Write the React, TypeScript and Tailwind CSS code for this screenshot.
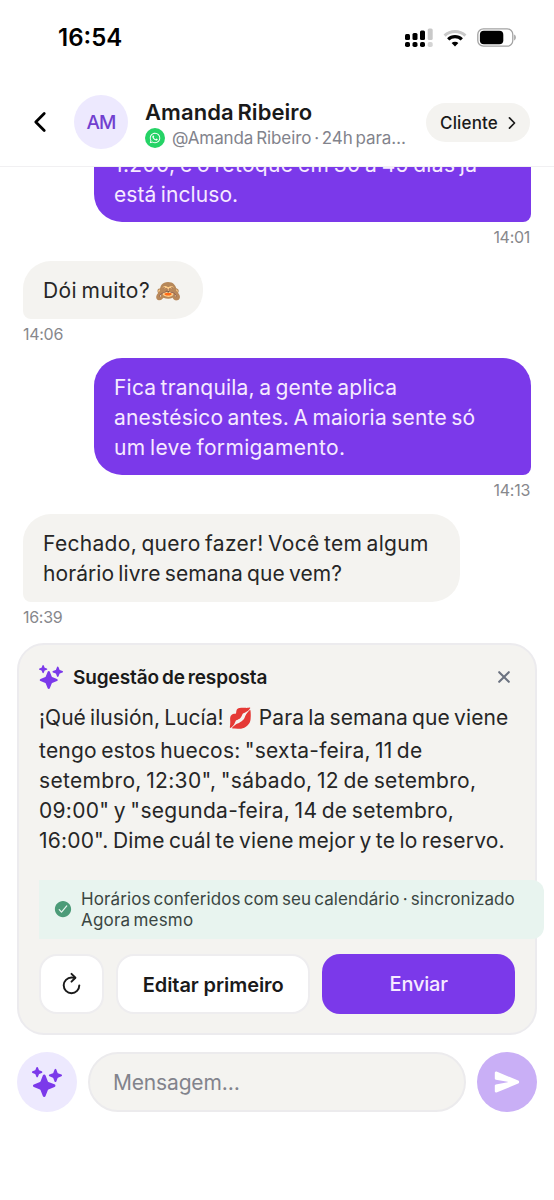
import { ReactNode } from 'react'
import {
  IoCheckmarkCircle,
  IoChevronBack,
  IoChevronForward,
  IoClose,
  IoLogoWhatsapp,
  IoRefreshOutline,
  IoSend,
  IoSparkles,
} from 'react-icons/io5'

type Line = { text: ReactNode; className?: string }

type Message = {
  id: string
  mine: boolean
  time: string
  lines: Line[]
}

const messages: Message[] = [
  {
    id: '1',
    mine: true,
    time: '14:01',
    lines: [
      { text: '1.200, e o retoque em 30 a 45 dias já', className: 'tracking-[0.35px]' },
      { text: 'está incluso.', className: 'tracking-[0.1px]' },
    ],
  },
  {
    id: '2',
    mine: false,
    time: '14:06',
    lines: [
      {
        text: (
          <>
            <span className="tracking-[0.42px]">Dói muito? </span>
            <span className="inline-block w-[28px] text-[21px] leading-none">🙈</span>
          </>
        ),
      },
    ],
  },
  {
    id: '3',
    mine: true,
    time: '14:13',
    lines: [
      { text: 'Fica tranquila, a gente aplica', className: 'tracking-[0.2px]' },
      { text: 'anestésico antes. A maioria sente só', className: 'tracking-[0.21px]' },
      { text: 'um leve formigamento.', className: 'tracking-[0.35px]' },
    ],
  },
  {
    id: '4',
    mine: false,
    time: '16:39',
    lines: [
      { text: 'Fechado, quero fazer! Você tem algum', className: 'tracking-[0.31px]' },
      { text: 'horário livre semana que vem?', className: 'tracking-[0.08px]' },
    ],
  },
]

function StatusBar() {
  return (
    <div className="flex h-[75px] shrink-0 items-center justify-between pl-[58px] pr-[38px]">
      <span className="text-2xl font-semibold text-black">16:54</span>
      <div className="flex items-center">
        <svg width="28" height="20" viewBox="0 0 28 20" fill="#000">
          <rect x="0" y="6" width="5" height="6" rx="1.5" />
          <rect x="7.5" y="5" width="5" height="7" rx="1.5" />
          <rect x="15" y="2.5" width="5" height="9.5" rx="1.5" />
          <rect x="22.7" y="0.5" width="5" height="11.5" rx="1.5" fill="#c9c9c9" />
          <rect x="0" y="14" width="5" height="5" rx="1.8" />
          <rect x="7.5" y="14" width="5" height="5" rx="1.8" />
          <rect x="15" y="14" width="5" height="5" rx="1.8" />
          <rect x="22.7" y="14" width="5" height="5" rx="1.8" fill="#d4d4d4" />
        </svg>
        <svg className="ml-[10px]" width="24" height="18" viewBox="0 0 24 18" fill="none">
          <path d="M1.6 6.6a15 15 0 0 1 20.8 0" stroke="#c9c9c9" strokeWidth="3" />
          <path d="M5.2 10.4a9.8 9.8 0 0 1 13.6 0" stroke="#000" strokeWidth="3.2" />
          <path d="M12 17.4l-3.4-3.4a4.9 4.9 0 0 1 6.8 0z" fill="#000" />
        </svg>
        <svg className="ml-[10px]" width="39" height="19" viewBox="0 0 39 19" fill="none">
          <rect x="0.8" y="0.8" width="35" height="17.4" rx="5.6" stroke="#a3a3a3" strokeWidth="1.3" />
          <rect x="2.9" y="2.8" width="23.4" height="13.4" rx="4" fill="#000" />
          <path d="M37.3 6.6c1.8.6 1.8 5.2 0 5.8z" fill="#8f8f8f" />
        </svg>
      </div>
    </div>
  )
}

function Header() {
  return (
    <header className="flex h-[92px] shrink-0 items-center border-b border-[#f1f0f2] pt-[3px] pl-[25px] pr-6">
      <IoChevronBack className="size-[30px] text-black" />
      <div className="ml-[19px] flex size-[54px] shrink-0 items-center justify-center rounded-full bg-[#ede9fe] pt-[2px] text-[19px] font-medium tracking-[-0.8px] text-[#7140cf]">
        AM
      </div>
      <div className="ml-[17px] mt-[3px] flex-1 whitespace-nowrap">
        <h1 className="text-[22px] leading-7 font-semibold tracking-[0.06px] text-[#1a1a1a]">Amanda Ribeiro</h1>
        <div className="flex h-6 items-center">
          <span className="flex size-5 shrink-0 items-center justify-center rounded-full bg-[#25d366]">
            <IoLogoWhatsapp className="size-3 text-white" />
          </span>
          <span className="ml-[7px] pt-px text-[17px] leading-6 tracking-[-0.1px] text-[#82838c]">
            @Amanda Ribeiro · 24h para…
          </span>
        </div>
      </div>
      <button className="mt-px flex h-[39px] w-[104px] shrink-0 items-center rounded-full bg-[#f4f3f0] pl-[14px] text-[17px] font-medium tracking-[0.16px] text-[#1a1a1a]">
        Cliente
        <IoChevronForward className="ml-[5px] size-[18px]" />
      </button>
    </header>
  )
}

function Bubble({ message }: { message: Message }) {
  const { mine, time, lines } = message
  return (
    <div className={mine ? 'flex flex-col items-end' : 'flex flex-col items-start'}>
      <div
        className={
          mine
            ? 'w-[437px] rounded-[28px] rounded-br-lg bg-[#7b39ea] px-5 pt-[15px] pb-3 text-[#f6eaff]'
            : 'max-w-[437px] rounded-[28px] rounded-bl-lg bg-[#f4f3f0] px-5 pt-[15px] pb-[13px] text-[#262626]'
        }
      >
        {lines.map((line, i) => (
          <p
            key={i}
            className={`whitespace-nowrap ${!mine && lines.length > 1 ? 'w-[397px]' : ''} ${line.className ?? ''}`}
          >
            {line.text}
          </p>
        ))}
      </div>
      <span
        className={`mt-[5px] mb-[14px] text-base leading-5 tracking-[-0.29px] text-[#87888c] ${mine ? 'mr-px' : ''}`}
      >
        {time}
      </span>
    </div>
  )
}

function Suggestion() {
  return (
    <section className="mx-[17px] mt-[2px] h-[392px] shrink-0 rounded-[27px] border-2 border-[#ecebee] bg-[#f4f3f0] px-5 pt-[18px]">
      <div className="flex h-[30px] items-center">
        <IoSparkles className="mb-[2px] size-6 text-[#7b39ea]" />
        <h2 className="ml-[10px] text-[19px] font-semibold tracking-[-0.1px] text-[#1a1a1a]">
          Sugestão de resposta
        </h2>
        <IoClose className="mb-[2px] ml-auto size-[22px] text-[#6b7280]" />
      </div>

      <div className="whitespace-nowrap text-[#262626]">
        <p className="mt-[10px] mb-[3px]">
          <span className="tracking-[0.03px]">¡Qué ilusión, Lucía! </span>
          <span className="inline-block w-[24px] align-baseline text-[20px] leading-none">💋</span>
          <span className="ml-[7px] tracking-[0.1px]">Para la semana que viene</span>
        </p>
        <p className="tracking-[0.21px]">tengo estos huecos: "sexta-feira, 11 de</p>
        <p className="tracking-[0.34px]">setembro, 12:30", "sábado, 12 de setembro,</p>
        <p className="tracking-[0.3px]">09:00" y "segunda-feira, 14 de setembro,</p>
        <p className="tracking-[0.2px]">16:00". Dime cuál te viene mejor y te lo reservo.</p>
      </div>

      <div className="mt-[24px] flex h-[59px] w-[505px] items-center rounded-r-xl bg-[#e8f4ef] pt-px pl-[14px] text-[17px] leading-[21px] tracking-[0.1px] text-[#3a4642]">
        <IoCheckmarkCircle className="mb-[2px] size-5 shrink-0 text-[#4c9b78]" />
        <p className="ml-[8px] whitespace-nowrap">
          Horários conferidos com seu calendário · sincronizado
          <br />
          <span className="tracking-[0.2px]">Agora mesmo</span>
        </p>
      </div>

      <div className="mt-[15px] flex h-[60px] gap-3">
        <button className="flex w-[65px] items-center justify-center rounded-[18px] border-2 border-[#eeedef] bg-white pb-[2px]">
          <IoRefreshOutline className="size-[25px] text-[#1a1a1a] [&_*]:[stroke-width:40px]" />
        </button>
        <button className="w-[195px] rounded-[18px] border-2 border-[#eeedef] bg-white pt-px text-xl font-semibold tracking-[-0.08px] text-[#1a1a1a]">
          Editar primeiro
        </button>
        <button className="w-[193px] rounded-[18px] bg-[#7b39ea] text-xl font-medium tracking-[-0.2px] text-[#f6eaff]">
          Enviar
        </button>
      </div>
    </section>
  )
}

function Composer() {
  return (
    <footer className="mt-[17px] flex h-[60px] shrink-0 items-center px-[17px]">
      <button className="flex size-[60px] items-center justify-center rounded-full bg-[#ede9fe]">
        <IoSparkles className="size-[30px] text-[#7b39ea]" />
      </button>
      <div className="ml-[11px] flex h-[60px] w-[378px] items-center rounded-full border-2 border-[#ecebed] bg-[#f4f3f0] pt-px pl-[23px] tracking-[-0.17px] text-[#82838c]">
        Mensagem…
      </div>
      <button className="ml-[11px] flex size-[60px] items-center justify-center rounded-full bg-[#c9aff6]">
        <IoSend className="size-[26px] text-white" />
      </button>
    </footer>
  )
}

export default function App() {
  return (
    <div className="flex h-[1200px] w-[554px] flex-col overflow-hidden bg-white font-['Inter','Liberation_Sans',sans-serif] text-[21px] leading-[30px] [word-spacing:-1.8px]">
      <StatusBar />
      <Header />
      <main className="flex h-[474px] shrink-0 flex-col justify-end overflow-hidden pl-[23px] pr-[23px]">
        {messages.map((message) => (
          <Bubble key={message.id} message={message} />
        ))}
      </main>
      <Suggestion />
      <Composer />
    </div>
  )
}
